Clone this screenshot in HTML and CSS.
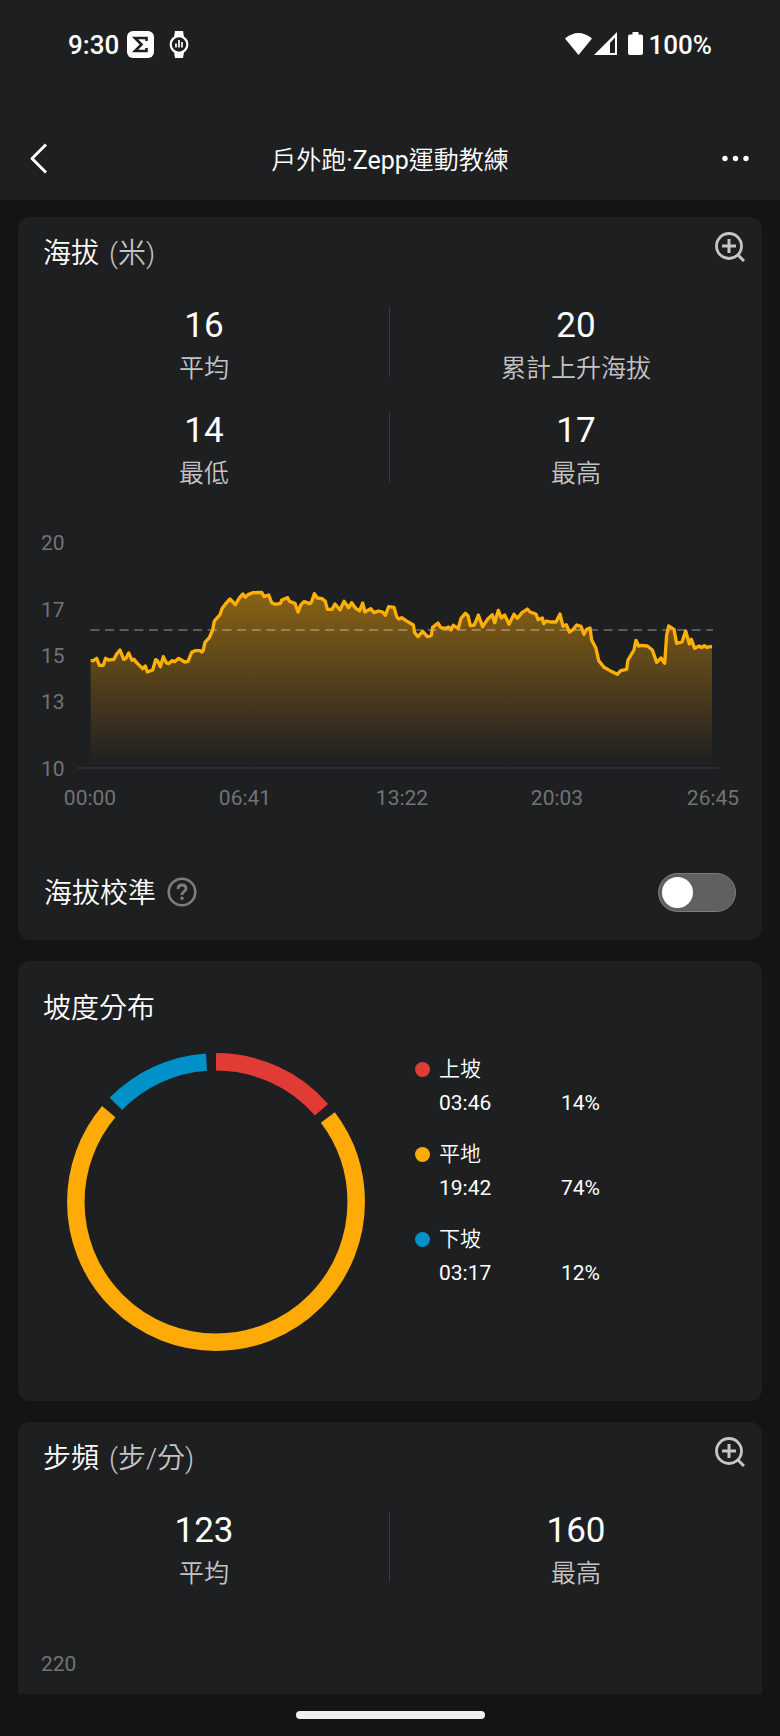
FILE: index.html
```html
<!DOCTYPE html>
<html lang="zh-Hant">
<head>
<meta charset="utf-8">
<meta name="viewport" content="width=device-width, initial-scale=1">
<title>戶外跑·Zepp運動教練</title>
<link rel="stylesheet" href="styles.css">
</head>
<body>
<div class="app">
  <header class="top">
    <div class="status">
      <div class="status-side">
        <span class="status-text">9:30</span>
        <svg class="icon-zepp" width="27" height="27" viewBox="0 0 27 27" aria-hidden="true">
          <rect width="27" height="27" rx="6" fill="#fff"/>
          <path d="M19.500 10V7H8L14.500 13.500L8 20H19.500V17" fill="none" stroke="#1e1f21" stroke-width="2.600"/>
        </svg>
        <svg width="20" height="27" viewBox="0 0 20 27" aria-hidden="true">
          <path d="M6 0H14L15 6H5ZM5 21H15L14 27H6Z" fill="#fff"/>
          <circle cx="10" cy="13.500" r="8.300" fill="#1e1f21" stroke="#fff" stroke-width="2.200"/>
          <path d="M7 12.500V16.500M10 9V16.500M13 11V16.500" stroke="#fff" stroke-width="1.700"/>
        </svg>
      </div>
      <div class="status-side status-right">
        <svg width="27" height="24" viewBox="0 0 27 24" aria-hidden="true">
          <path d="M0 6.500Q13.500 -4.500 27 6.500L13.500 23Z" fill="#fff"/>
        </svg>
        <svg width="23" height="24" viewBox="0 0 23 24" aria-hidden="true">
          <path fill-rule="evenodd" d="M23 0V23H0ZM21 5.500L16 11V21H21Z" fill="#fff"/>
        </svg>
        <svg class="icon-battery" width="15" height="24" viewBox="0 0 15 24" aria-hidden="true">
          <path d="M4.500 0H10.500V2.500H13Q15 2.500 15 4.500V21Q15 23 13 23H2Q0 23 0 21V4.500Q0 2.500 2 2.500H4.500Z" fill="#fff"/>
        </svg>
        <span class="status-text">100%</span>
      </div>
    </div>
    <div class="bar">
      <button class="bar-button" type="button" aria-label="返回">
        <svg width="40" height="32" viewBox="0 0 40 32" aria-hidden="true">
          <path d="M26 2.500L12 16.500L26 30.500" fill="none" stroke="#fff" stroke-width="3" stroke-linejoin="round"/>
        </svg>
      </button>
      <h1 class="bar-title">戶外跑·Zepp運動教練</h1>
      <button class="bar-button" type="button" aria-label="更多">
        <svg width="40" height="32" viewBox="0 0 40 32" aria-hidden="true">
          <g fill="#fff"><circle cx="5" cy="16.500" r="2.700"/><circle cx="15.500" cy="16.500" r="2.700"/><circle cx="26" cy="16.500" r="2.700"/></g>
        </svg>
      </button>
    </div>
  </header>

  <main class="cards">
    <section class="card">
      <div class="card-head">
        <h2 class="card-title">海拔<span class="unit">(米)</span></h2>
        <button class="icon-button" type="button" aria-label="放大海拔圖表">
          <svg width="32" height="32" viewBox="0 0 32 32" fill="none" stroke="#c6c6c6" aria-hidden="true">
            <circle cx="16" cy="16" r="12.500" stroke-width="2.800"/>
            <path d="M25 25L31 31" stroke-width="3"/>
            <path d="M9 16H23M16 9V23" stroke-width="3"/>
          </svg>
        </button>
      </div>
      <dl class="stats">
        <div class="stat"><dd class="stat-value">16</dd><dt class="stat-label">平均</dt></div>
        <div class="stat"><dd class="stat-value">20</dd><dt class="stat-label">累計上升海拔</dt></div>
        <div class="stat"><dd class="stat-value">14</dd><dt class="stat-label">最低</dt></div>
        <div class="stat"><dd class="stat-value">17</dd><dt class="stat-label">最高</dt></div>
      </dl>
      <svg class="chart" viewBox="0 0 744 300" role="img" aria-label="海拔變化">
        <defs>
          <linearGradient id="fade" gradientUnits="userSpaceOnUse" x1="0" y1="217" x2="0" y2="735">
            <stop offset="0" stop-color="#ffab07" stop-opacity=".48"/>
            <stop offset="1" stop-color="#ffab07" stop-opacity="0"/>
          </linearGradient>
        </defs>
        <g transform="translate(2 0) scale(.33333)" fill="none">
          <path d="M172 744H2096" stroke="#333437" stroke-width="5"/>
          <path fill="url(#fade)" d="M212 742V422L220 422 230 415 238 436 250 436 257 415 265 420 282 418 290 402 300 390 311 418 317 416 326 399 336 421 342 418 352 430 368 446 376 438 382 456 398 450 407 419 413 423 421 440 430 410 439 428 446 431 456 422 464 425 476 415 494 426 504 424 515 397 525 392 540 392 546 396 550 390 555 367 568 353 578 330 583 303 600 284 606 266 618 250 630 237 646 254 658 234 669 222 676 232 684 224 700 218 725 217 732 230 746 225 755 248 766 253 782 250 785 240 803 233 808 244 825 250 834 276 843 254 852 245 870 251 875 245 883 221 892 234 906 236 916 244 922 268 936 268 945 252 960 270 972 244 986 263 995 248 1008 266 1019 272 1028 249 1035 276 1052 266 1062 278 1075 273 1088 276 1096 286 1106 260 1122 262 1130 290 1136 297 1145 293 1158 302 1180 315 1184 338 1194 350 1208 334 1222 350 1234 346 1238 322 1254 309 1262 323 1278 325 1286 321 1293 330 1300 316 1315 325 1323 295 1336 280 1344 287 1351 317 1363 315 1375 285 1388 320 1404 296 1417 284 1424 308 1435 271 1444 294 1454 285 1467 313 1482 283 1492 295 1506 278 1522 267 1530 276 1548 282 1554 299 1567 294 1571 311 1580 303 1592 306 1608 306 1620 282 1629 319 1639 314 1648 336 1660 328 1670 315 1683 319 1692 343 1700 328 1710 324 1715 360 1728 385 1736 422 1752 442 1770 452 1792 463 1802 452 1820 448 1824 420 1842 390 1848 361 1856 378 1865 376 1882 378 1897 390 1910 427 1923 414 1934 430 1940 345 1946 318 1962 328 1970 370 1986 366 1997 333 2008 372 2014 358 2024 385 2038 378 2045 383 2053 377 2060 382 2076 379V742Z"/>
          <path d="M211 330H2079" stroke="#fff" stroke-opacity=".36" stroke-width="5" stroke-dasharray="27 17"/>
          <path stroke="#ffb007" stroke-width="10" stroke-linejoin="round" d="M212 422L220 422 230 415 238 436 250 436 257 415 265 420 282 418 290 402 300 390 311 418 317 416 326 399 336 421 342 418 352 430 368 446 376 438 382 456 398 450 407 419 413 423 421 440 430 410 439 428 446 431 456 422 464 425 476 415 494 426 504 424 515 397 525 392 540 392 546 396 550 390 555 367 568 353 578 330 583 303 600 284 606 266 618 250 630 237 646 254 658 234 669 222 676 232 684 224 700 218 725 217 732 230 746 225 755 248 766 253 782 250 785 240 803 233 808 244 825 250 834 276 843 254 852 245 870 251 875 245 883 221 892 234 906 236 916 244 922 268 936 268 945 252 960 270 972 244 986 263 995 248 1008 266 1019 272 1028 249 1035 276 1052 266 1062 278 1075 273 1088 276 1096 286 1106 260 1122 262 1130 290 1136 297 1145 293 1158 302 1180 315 1184 338 1194 350 1208 334 1222 350 1234 346 1238 322 1254 309 1262 323 1278 325 1286 321 1293 330 1300 316 1315 325 1323 295 1336 280 1344 287 1351 317 1363 315 1375 285 1388 320 1404 296 1417 284 1424 308 1435 271 1444 294 1454 285 1467 313 1482 283 1492 295 1506 278 1522 267 1530 276 1548 282 1554 299 1567 294 1571 311 1580 303 1592 306 1608 306 1620 282 1629 319 1639 314 1648 336 1660 328 1670 315 1683 319 1692 343 1700 328 1710 324 1715 360 1728 385 1736 422 1752 442 1770 452 1792 463 1802 452 1820 448 1824 420 1842 390 1848 361 1856 378 1865 376 1882 378 1897 390 1910 427 1923 414 1934 430 1940 345 1946 318 1962 328 1970 370 1986 366 1997 333 2008 372 2014 358 2024 385 2038 378 2045 383 2053 377 2060 382 2076 379"/>
        </g>
        <g class="axis">
          <text x="23" y="30">20</text>
          <text x="23" y="97">17</text>
          <text x="23" y="143">15</text>
          <text x="23" y="189">13</text>
          <text x="23" y="256">10</text>
        </g>
        <g class="axis axis-time">
          <text x="72" y="285">00:00</text>
          <text x="227" y="285">06:41</text>
          <text x="384" y="285">13:22</text>
          <text x="539" y="285">20:03</text>
          <text x="695" y="285">26:45</text>
        </g>
      </svg>
      <div class="calibrate">
        <label class="card-title" for="calibrate">海拔校準</label>
        <button class="help" type="button" aria-label="說明">
          <svg width="30" height="30" viewBox="0 0 30 30" fill="none" stroke="#7d7d7d" aria-hidden="true">
            <circle cx="15" cy="15" r="13.300" stroke-width="2.600"/>
            <path d="M11 12.200C11 9.500 12.600 8 15 8S19 9.500 19 11.700C19 14.300 15 14.600 15 18" stroke-width="2.800"/>
            <circle cx="15" cy="21.200" r="1.700" fill="#7d7d7d" stroke="none"/>
          </svg>
        </button>
        <input class="switch" type="checkbox" role="switch" id="calibrate">
      </div>
    </section>

    <section class="card card-slope">
      <h2 class="card-title">坡度分布</h2>
      <div class="slope">
        <svg class="donut" width="300" height="300" viewBox="0 0 300 300" role="img" aria-label="坡度分布">
          <g fill="none" stroke-width="17.500" transform="rotate(-90 150 150)">
            <circle cx="150" cy="150" r="140.200" pathLength="360" stroke="#e13b35" stroke-dasharray="48.800 311.200"/>
            <circle cx="150" cy="150" r="140.200" pathLength="360" stroke="#ffab07" stroke-dasharray="257.200 102.800" stroke-dashoffset="-52.900"/>
            <circle cx="150" cy="150" r="140.200" pathLength="360" stroke="#0091c9" stroke-dasharray="41.700 318.300" stroke-dashoffset="-314.400"/>
          </g>
        </svg>
        <ul class="legend">
          <li class="legend-item">
            <span class="dot dot-up"></span><span class="legend-name">上坡</span>
            <span class="legend-time">03:46</span><span>14%</span>
          </li>
          <li class="legend-item">
            <span class="dot dot-flat"></span><span class="legend-name">平地</span>
            <span class="legend-time">19:42</span><span>74%</span>
          </li>
          <li class="legend-item">
            <span class="dot dot-down"></span><span class="legend-name">下坡</span>
            <span class="legend-time">03:17</span><span>12%</span>
          </li>
        </ul>
      </div>
    </section>

    <section class="card card-last">
      <div class="card-head">
        <h2 class="card-title">步頻<span class="unit">(步/分)</span></h2>
        <button class="icon-button" type="button" aria-label="放大步頻圖表">
          <svg width="32" height="32" viewBox="0 0 32 32" fill="none" stroke="#c6c6c6" aria-hidden="true">
            <circle cx="16" cy="16" r="12.500" stroke-width="2.800"/>
            <path d="M25 25L31 31" stroke-width="3"/>
            <path d="M9 16H23M16 9V23" stroke-width="3"/>
          </svg>
        </button>
      </div>
      <dl class="stats">
        <div class="stat"><dd class="stat-value">123</dd><dt class="stat-label">平均</dt></div>
        <div class="stat"><dd class="stat-value">160</dd><dt class="stat-label">最高</dt></div>
      </dl>
      <p class="axis-top">220</p>
    </section>
  </main>

  <div class="home"><span class="home-bar"></span></div>
</div>
</body>
</html>
```

FILE: styles.css
```css
* {
  box-sizing: border-box;
  margin: 0;
  padding: 0;
}

body {
  background: #141414;
  color: #fff;
  font-family: Roboto, "Noto Sans CJK TC DemiLight", "Noto Sans CJK TC", sans-serif;
  font-size: 21px;
}

button {
  background: none;
  border: 0;
  cursor: pointer;
}

svg {
  display: block;
}

.app {
  display: flex;
  flex-direction: column;
  min-height: 100vh;
}

/* Header */

.top {
  background: #1e1f21;
}

.status {
  display: flex;
  justify-content: space-between;
  padding: 28px 68px 0;
}

.status-side {
  display: flex;
  align-items: center;
  height: 32px;
}

.status-text {
  padding-top: 1px;
  font-size: 26px;
  font-weight: 500;
  line-height: 32px;
}

.icon-zepp {
  margin: 0 15px 0 8px;
}

.status-right {
  gap: 2px;
}

.icon-battery {
  margin: 0 4px 0 9px;
}

.bar {
  display: flex;
  align-items: center;
  justify-content: space-between;
  padding: 79px 20px 23px;
}

.bar-button {
  width: 40px;
  height: 32px;
}

.bar-title {
  padding-top: 6px;
  font-size: 25px;
  font-weight: 400;
  line-height: 32px;
}

.icon-button {
  width: 32px;
  height: 32px;
}

/* Cards */

.cards {
  display: flex;
  flex: 1;
  flex-direction: column;
  gap: 21px;
  padding: 17px 18px 0;
}

.card {
  background: #1e1f21;
  border-radius: 12px;
}

.card-head {
  display: flex;
  align-items: flex-start;
  justify-content: space-between;
  height: 56px;
  padding: 13px 17px 0 25px;
}

.card-head .card-title {
  padding-top: 4px;
}

.card-title {
  font-size: 28px;
  font-weight: 350;
  line-height: 40px;
}

.unit {
  padding-left: 10px;
  color: #c4c4c4;
  font-weight: 300;
}

.stats {
  display: grid;
  grid-template-columns: 1fr 1fr;
  row-gap: 26px;
  padding-top: 34px;
}

.stat {
  padding-top: 1px;
  text-align: center;
  background: linear-gradient(#3a3b3e, #3a3b3e) right top / 1px 70px no-repeat;
}

.stat:nth-child(even) {
  background: none;
}

.stat-value {
  font-size: 35px;
  font-weight: 400;
  line-height: 36px;
}

.stat-label {
  padding-top: 8px;
  color: #c4c4c4;
  font-size: 25px;
  font-weight: 300;
  line-height: 34px;
}

.chart {
  width: 100%;
  margin-top: 29px;
}

.axis {
  fill: #727374;
  font-size: 21px;
}

.axis-time {
  text-anchor: middle;
}

.calibrate {
  display: flex;
  align-items: center;
  padding: 50px 26px 26px;
}

.calibrate .card-title {
  padding-top: 4px;
}

.help {
  width: 30px;
  height: 30px;
  margin: 0 auto 0 11px;
}

.switch {
  appearance: none;
  width: 78px;
  height: 39px;
  padding: 3px;
  background: #606060;
  border: 1px solid #7d7d7d;
  border-radius: 20px;
  cursor: pointer;
}

.switch::before {
  display: block;
  width: 31px;
  height: 31px;
  background: #fff;
  border-radius: 50%;
  content: "";
}

.switch:checked {
  background: #0091c9;
}

.switch:checked::before {
  margin-left: auto;
}

/* Slope */

.card-slope {
  padding: 28px 25px 49px;
}

.slope {
  display: flex;
  gap: 49px;
  padding: 23px 0 0 23px;
}

.donut {
  flex: none;
}

.legend {
  display: flex;
  flex-direction: column;
  gap: 17px;
  list-style: none;
}

.legend-item {
  display: grid;
  grid-template-columns: 15px 113px auto;
  column-gap: 9px;
  align-items: center;
  line-height: 34px;
}

.legend-name {
  grid-column: 2 / 4;
  font-weight: 350;
}

.legend-time {
  grid-column: 2;
}

.dot {
  width: 15px;
  height: 15px;
  border-radius: 50%;
}

.dot-up {
  background: #e13b35;
}

.dot-flat {
  background: #ffab07;
}

.dot-down {
  background: #0091c9;
}

/* Cadence */

.card-last {
  flex: 1;
  border-radius: 12px 12px 0 0;
}

.axis-top {
  padding: 58px 23px 15px;
  color: #727374;
  line-height: 30px;
}

.home {
  display: flex;
  justify-content: center;
  padding: 17px 0;
}

.home-bar {
  width: 189px;
  height: 8px;
  background: #f1efef;
  border-radius: 4px;
}
```
